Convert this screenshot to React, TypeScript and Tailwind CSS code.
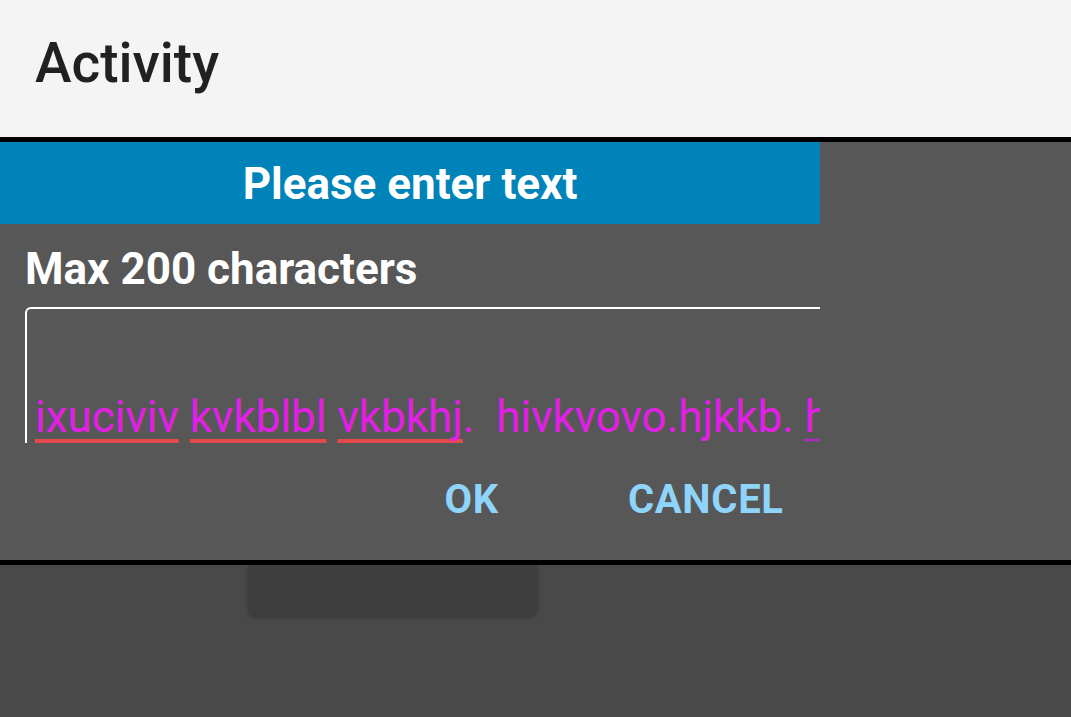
import React from "react";

export default function App() {
  const red = "underline decoration-[#e54a4a] decoration-[4px] underline-offset-[7px] [text-decoration-skip-ink:none]";
  return (
    <div className="w-[1071px] h-[717px] overflow-hidden flex flex-col bg-[#494949]" style={{ fontFamily: "Roboto, 'Noto Sans', sans-serif" }}>
      {/* App bar */}
      <div className="h-[137px] shrink-0 bg-[#f4f4f4] pl-[35px] pt-[36px]">
        <div className="text-[55px] leading-none font-medium text-[#212121]">Activity</div>
      </div>
      <div className="h-[5px] shrink-0 bg-black" />
      {/* Dialog region */}
      <div className="h-[418px] shrink-0 bg-[#575757]">
        <div className="w-[820px] h-full overflow-hidden flex flex-col">
          <div className="h-[82px] shrink-0 bg-[#0083b9] pt-[20px] text-center">
            <span className="text-[44px] leading-none font-bold text-white">Please enter text</span>
          </div>
          <div className="pl-[25px] pt-[23px]">
            <div className="text-[44px] leading-none font-bold text-white">Max 200 characters</div>
            <div className="mt-[16px] w-[900px] h-[136px] border-t-2 border-l-2 border-white rounded-tl-[6px] overflow-hidden pl-[8px] pt-[82px]">
              <div className="text-[44px] leading-[52px] text-[#e31ee6] whitespace-pre">
                <span className={red}>ixuciviv</span>
                {" "}
                <span className={red}>kvkblbl</span>
                {" "}
                <span className={red}>vkbkhj</span>
                {".  hivkvovo.hjkkb. "}
                <span className="underline decoration-[#c020d0] decoration-[2px] underline-offset-[7px] [text-decoration-skip-ink:none]">hjhvh</span>
              </div>
            </div>
          </div>
          <div className="mt-[37px] flex justify-end pr-[37px] gap-[129px] text-[40px] leading-none font-bold tracking-[0.7px] text-[#8fd4fa]">
            <span>OK</span>
            <span className="-mr-[0.7px]">CANCEL</span>
          </div>
        </div>
      </div>
      <div className="h-[5px] shrink-0 bg-black" />
      {/* Below */}
      <div className="flex-1 bg-[#494949] pl-[248px]">
        <div className="w-[289px] h-[50px] bg-[#3d3d3d] rounded-b-[6px] shadow-[0_2px_4px_rgba(0,0,0,0.25)]" />
      </div>
    </div>
  );
}
